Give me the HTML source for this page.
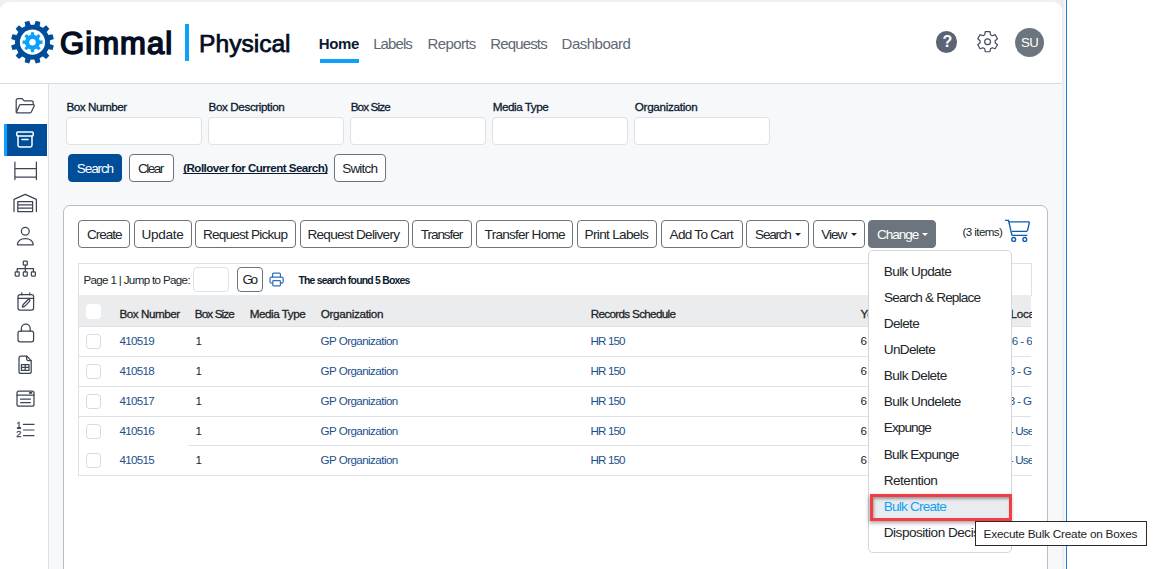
<!DOCTYPE html>
<html lang="en"><head><meta charset="utf-8"><title>Gimmal Physical</title>
<style>
html,body{margin:0;padding:0}
body{width:1159px;height:569px;overflow:hidden;background:#fff;font-family:"Liberation Sans",sans-serif;position:relative;color:#212529}
.abs,.t,.b,.in,.cb{position:absolute;box-sizing:border-box}
.t{white-space:nowrap}
.b{height:28px;top:220px;border:1px solid #6c757d;border-radius:4px;background:#fff}
.in{height:28px;top:117px;width:136px;border:1px solid #dee2e6;border-radius:4px;background:#fff}
.cb{left:86px;width:14.5px;height:14.5px;border:1px solid #d5dae0;border-radius:3.5px;background:#fff}
.ln{position:absolute;left:79px;width:952px;height:1px;background:#dee2e6}
.car{position:absolute;width:0;height:0;border-left:3px solid transparent;border-right:3px solid transparent;border-top:3.5px solid #212529;top:233px}
svg{position:absolute;overflow:visible}
.ic{fill:none;stroke:#3d4555;stroke-width:1.25;stroke-linecap:round;stroke-linejoin:round}
</style></head>
<body>
<div class="abs" style="left:0;top:0;width:1066px;height:569px;background:linear-gradient(to right,#f0f0f0 0,#f0f0f0 1060px,#e7e7e7 1062px,#fbfbfb 1066px)"></div>
<div class="abs" style="left:1066px;top:0;width:1px;height:569px;background:#1c7cd3"></div>
<header class="abs" style="left:0;top:1.6px;width:1062px;height:82.4px;background:#fff;border-bottom:1px solid #d8dde4;border-radius:9px 9px 0 0"></header>
<nav class="abs" style="left:0;top:84px;width:49px;height:485px;background:#fff;border-right:1px solid #dcdfe4"></nav>
<main class="abs" style="left:49px;top:84px;width:1013px;height:485px;background:#f7f8fa"></main>
<svg class="abs" style="left:0;top:0" width="70" height="84" viewBox="0 0 70 84"><path d="M34.21,25.09 L35.77,20.85 L40.35,22.08 L39.58,26.52 L42.54,28.23 L46.01,25.34 L49.36,28.69 L46.47,32.16 L48.18,35.12 L52.62,34.35 L53.85,38.93 L49.61,40.49 L49.61,43.91 L53.85,45.47 L52.62,50.05 L48.18,49.28 L46.47,52.24 L49.36,55.71 L46.01,59.06 L42.54,56.17 L39.58,57.88 L40.35,62.32 L35.77,63.55 L34.21,59.31 L30.79,59.31 L29.23,63.55 L24.65,62.32 L25.42,57.88 L22.46,56.17 L18.99,59.06 L15.64,55.71 L18.53,52.24 L16.82,49.28 L12.38,50.05 L11.15,45.47 L15.39,43.91 L15.39,40.49 L11.15,38.93 L12.38,34.35 L16.82,35.12 L18.53,32.16 L15.64,28.69 L18.99,25.34 L22.46,28.23 L25.42,26.52 L24.65,22.08 L29.23,20.85 L30.79,25.09Z" fill="#004e9a"/><circle cx="32.5" cy="42.2" r="17.4" fill="#004e9a"/><circle cx="32.5" cy="42.2" r="12.6" fill="#fff"/><path d="M30.82,35.20 L30.92,32.22 L34.08,32.22 L34.18,35.20 L36.26,36.06 L38.44,34.03 L40.67,36.26 L38.64,38.44 L39.50,40.52 L42.48,40.62 L42.48,43.78 L39.50,43.88 L38.64,45.96 L40.67,48.14 L38.44,50.37 L36.26,48.34 L34.18,49.20 L34.08,52.18 L30.92,52.18 L30.82,49.20 L28.74,48.34 L26.56,50.37 L24.33,48.14 L26.36,45.96 L25.50,43.88 L22.52,43.78 L22.52,40.62 L25.50,40.52 L26.36,38.44 L24.33,36.26 L26.56,34.03 L28.74,36.06Z" fill="#0aa2fb"/><circle cx="32.5" cy="42.2" r="7.5" fill="#0aa2fb"/><circle cx="32.5" cy="42.2" r="3.2" fill="#fff"/></svg>
<div class="abs" style="left:185px;top:24px;width:4px;height:37px;background:#0aa2fb"></div>
<div class="abs" style="left:320px;top:59px;width:39px;height:4px;background:#0aa2fb"></div>
<div class="abs" style="left:935.6px;top:31px;width:21.5px;height:21.5px;border-radius:50%;background:#5b6475"></div>
<div class="abs" style="left:1015px;top:27.8px;width:29px;height:29px;border-radius:50%;background:#6c757d"></div>
<svg style="left:975px;top:29px" width="26" height="26" viewBox="0 0 26 26"><g fill="none" stroke="#434b5b" stroke-width="1.2" stroke-linejoin="round"><path d="M9.73,5.66 L10.25,2.67 L14.95,2.67 L15.47,5.66 L17.26,6.69 L20.11,5.65 L22.46,9.72 L20.13,11.67 L20.13,13.73 L22.46,15.68 L20.11,19.75 L17.26,18.71 L15.47,19.74 L14.95,22.73 L10.25,22.73 L9.73,19.74 L7.94,18.71 L5.09,19.75 L2.74,15.68 L5.07,13.73 L5.07,11.67 L2.74,9.72 L5.09,5.65 L7.94,6.69Z"/><circle cx="12.6" cy="12.7" r="2.9"/></g></svg>
<div class="abs" style="left:4px;top:124px;width:43px;height:32px;background:#004e9a;border-left:3px solid #0aa2fb"></div>
<svg style="left:15px;top:97px" width="21" height="18" viewBox="0 0 21 18"><g class="ic" ><path d="M1.2 14.5V3.2a1.6 1.6 0 0 1 1.6-1.6h4.4l2 2.2h7.4a1.6 1.6 0 0 1 1.6 1.6v2"/><path d="M1.3 15.6l3.2-7.3a1.2 1.2 0 0 1 1.1-.7h12.8a.9.9 0 0 1 .8 1.3l-2.9 6.2a1.2 1.2 0 0 1-1.1.7H2.2a.9.9 0 0 1-.9-1z"/></g></svg>
<svg style="left:16px;top:130.5px" width="18" height="18" viewBox="0 0 18 18"><g class="ic" style="stroke:#fff;stroke-width:1.5"><rect x="0.8" y="1" width="16.4" height="4" rx="1"/><path d="M2 5v9.3a1.7 1.7 0 0 0 1.7 1.7h10.6a1.7 1.7 0 0 0 1.7-1.7V5"/><path d="M6 8.6h6"/></g></svg>
<svg style="left:13.5px;top:161px" width="24" height="20" viewBox="0 0 24 20"><g class="ic" ><path d="M0.9 1v17.6M22.4 1v17.6M0.9 7.5h21.5M0.9 16h21.5"/></g></svg>
<svg style="left:13px;top:193px" width="25" height="20" viewBox="0 0 25 20"><g class="ic" ><path d="M1 18.6V6.4L12.2 1.4 23.4 6.4V18.6"/><path d="M4.8 18.6V8.6h14.8v10zM4.8 11.9h14.8M4.8 15.2h14.8"/></g></svg>
<svg style="left:16px;top:226px" width="19" height="20" viewBox="0 0 19 20"><g class="ic" ><circle cx="9.3" cy="5.2" r="3.9"/><path d="M1.4 18.8c.2-3.6 3.2-6.2 7.9-6.2s7.7 2.6 7.9 6.2z"/></g></svg>
<svg style="left:14px;top:259.5px" width="23" height="18" viewBox="0 0 23 18"><g class="ic" ><rect x="9.3" y="1" width="4" height="4.2" rx="0.7"/><rect x="1.2" y="11.8" width="4" height="4.2" rx="0.7"/><rect x="9.3" y="11.8" width="4" height="4.2" rx="0.7"/><rect x="17.4" y="11.8" width="4" height="4.2" rx="0.7"/><path d="M11.3 5.2v6.6M3.2 11.8V8.5h16.2v3.3"/></g></svg>
<svg style="left:16.5px;top:291.5px" width="18" height="20" viewBox="0 0 18 20"><g class="ic" ><rect x="1" y="2.6" width="15.6" height="15.4" rx="2"/><path d="M1 6.4h15.6M4.8 0.8v2M12.8 0.8v2"/><path d="M5.4 15.2l.6-2.4 5-5a1 1 0 0 1 1.6 1.6l-5 5z"/></g></svg>
<svg style="left:16.5px;top:323px" width="18" height="20" viewBox="0 0 18 20"><g class="ic" ><rect x="1" y="8.2" width="15.6" height="10.6" rx="2"/><path d="M4.4 8.2V5.6a4.4 4.4 0 0 1 8.8 0v2.6"/></g></svg>
<svg style="left:18px;top:355px" width="15" height="20" viewBox="0 0 15 20"><g class="ic" ><path d="M8.6 1H3a2 2 0 0 0-2 2v13.4a2 2 0 0 0 2 2h8.2a2 2 0 0 0 2-2V5.6z"/><path d="M8.6 1v3a1.6 1.6 0 0 0 1.6 1.6h3"/><path d="M3.4 9.6h7.6v5.8H3.4zM3.4 12.4h7.6M7.2 9.6v5.8"/></g></svg>
<svg style="left:15.7px;top:389.5px" width="20" height="18" viewBox="0 0 20 18"><g class="ic" ><rect x="1" y="1.2" width="17" height="15" rx="2"/><path d="M1 5.2h17M4.6 9.2h9.8M4.6 12.6h9.8"/><path d="M13.6 2.9h2" style="stroke-width:1.6"/></g></svg>
<svg style="left:16px;top:421px" width="20" height="18" viewBox="0 0 20 18"><g class="ic" ><path d="M7.4 3.4h10.6M7.4 9h10.6M7.4 14.6h10.6" style="stroke-width:1.1"/></g></svg>
<span class="t" style="left:16.4px;top:421.09px;font-size:8.4px;line-height:8.4px;-webkit-text-stroke:0.3px #3d4555;color:#3d4555">1</span>
<span class="t" style="left:16.3px;top:430.21px;font-size:9.2px;line-height:9.2px;-webkit-text-stroke:0.3px #3d4555;color:#3d4555">2</span>
<div class="abs" style="left:16.8px;top:427.5px;width:4.6px;height:0.9px;background:#3d4555"></div>
<div class="in" style="left:66px"></div>
<div class="in" style="left:208px"></div>
<div class="in" style="left:350px"></div>
<div class="in" style="left:492px"></div>
<div class="in" style="left:634px"></div>
<div class="b" style="left:68px;top:154px;width:54px;background:#004e9a;border-color:#004e9a"></div>
<div class="b" style="left:129px;top:154px;width:45px"></div>
<div class="b" style="left:334px;top:154px;width:52px"></div>
<section class="abs" style="left:63px;top:205px;width:985px;height:380px;background:#fff;border:1px solid #b9bdc4;border-radius:7px"></section>
<div class="b" style="left:78px;width:52.4px"></div>
<div class="b" style="left:134px;width:57.6px"></div>
<div class="b" style="left:195px;width:100.6px"></div>
<div class="b" style="left:300px;width:108.6px"></div>
<div class="b" style="left:412px;width:59.6px"></div>
<div class="b" style="left:476px;width:96.6px"></div>
<div class="b" style="left:577px;width:79.8px"></div>
<div class="b" style="left:661px;width:81.6px"></div>
<div class="b" style="left:746px;width:62.6px"></div>
<div class="b" style="left:813px;width:51.6px"></div>
<div class="b" style="left:868px;width:68px;background:#6c757d"></div>
<div class="car" style="left:794.6px"></div><div class="car" style="left:851px"></div><div class="car" style="left:922.3px;border-top-color:#fff"></div>
<svg style="left:1000px;top:215px" width="36" height="32" viewBox="1000 215 36 32"><g fill="none" stroke="#0d5cab" stroke-width="1.35" stroke-linecap="round" stroke-linejoin="round"><path d="M1005.5 220.3h2.3a.9.9 0 0 1 .9.7l3 13.3a1.2 1.2 0 0 0 1.2 1h14"/><path d="M1009.2 221.8h19.2a.9.9 0 0 1 .9 1.1l-1.7 7.3a1.4 1.4 0 0 1-1.4 1.1h-13.8"/><circle cx="1013.7" cy="239.4" r="1.9"/><circle cx="1024.8" cy="239.4" r="1.9"/></g></svg>
<div class="abs" style="left:78px;top:263px;width:954px;height:213px;border:1px solid #dee2e6;border-right:0;background:#fff"></div>
<div class="abs" style="left:1031px;top:263px;width:1px;height:33px;background:#dee2e6"></div>
<div class="abs" style="left:79px;top:295.4px;width:952.4px;height:30.8px;background:#ebeced"></div>
<div class="ln" style="top:326px"></div>
<div class="ln" style="top:356px"></div>
<div class="ln" style="top:386px"></div>
<div class="ln" style="top:416px"></div>
<div class="ln" style="top:445px;left:188px;width:843px"></div>
<div class="abs" style="left:193px;top:267px;width:36px;height:25px;border:1px solid #dee2e6;border-radius:4px;background:#fff"></div>
<div class="b" style="left:237px;top:267px;width:26px;height:25px"></div>
<svg style="left:269px;top:272.4px" width="16" height="15" viewBox="0 0 16 15"><g class="ic" style="stroke:#2f6fb5;stroke-width:1.2"><path d="M3.6 5.2V2.2a1 1 0 0 1 1-1h5.8a1 1 0 0 1 1 1v3"/><rect x="1" y="5.2" width="13.2" height="6" rx="1.6"/><rect x="3.8" y="8.6" width="7.6" height="5.2" rx="0.8" fill="#fff"/></g></svg>
<div class="cb" style="top:304px;border-color:#fff"></div>
<div class="cb" style="top:334px"></div>
<div class="cb" style="top:364px"></div>
<div class="cb" style="top:394px"></div>
<div class="cb" style="top:424px"></div>
<div class="cb" style="top:453px"></div>
<div class="abs" style="left:1000px;top:296px;width:31.6px;height:179px;overflow:hidden">
<span class="t" style="left:10.6px;top:11.7px;font-size:11.7px;line-height:11.7px;letter-spacing:-0.3px;-webkit-text-stroke:0.3px #212529">Loca</span>
<span class="t" style="left:11.8px;top:38.8px;font-size:11.6px;line-height:11.6px;letter-spacing:-0.6px;color:#1c4f8c">6 - 6</span>
<span class="t" style="left:8.7px;top:68.8px;font-size:11.6px;line-height:11.6px;letter-spacing:-0.6px;color:#1c4f8c">3 - G</span>
<span class="t" style="left:8.7px;top:98.8px;font-size:11.6px;line-height:11.6px;letter-spacing:-0.6px;color:#1c4f8c">3 - G</span>
<span class="t" style="left:9.7px;top:128.8px;font-size:11.6px;line-height:11.6px;letter-spacing:-0.8px;color:#1c4f8c">- Use</span>
<span class="t" style="left:9.7px;top:157.8px;font-size:11.6px;line-height:11.6px;letter-spacing:-0.8px;color:#1c4f8c">- Use</span>
</div>
<span class="t" style="left:60.00px;top:27.51px;font-size:31.0px;line-height:31.0px;letter-spacing:1.063px;color:#040e23;-webkit-text-stroke:1.6px #040e23;">Gimmal</span>
<span class="t" style="left:199.07px;top:32.08px;font-size:24.6px;line-height:24.6px;letter-spacing:-0.009px;color:#040e23;-webkit-text-stroke:0.75px #040e23;">Physical</span>
<span class="t" style="left:318.80px;top:35.90px;font-size:15px;line-height:15px;letter-spacing:-0.378px;color:#0b1a30;font-weight:700;">Home</span>
<span class="t" style="left:373.20px;top:35.90px;font-size:15px;line-height:15px;letter-spacing:-0.920px;color:#5f6773;">Labels</span>
<span class="t" style="left:427.50px;top:35.90px;font-size:15px;line-height:15px;letter-spacing:-0.620px;color:#5f6773;">Reports</span>
<span class="t" style="left:490.20px;top:35.90px;font-size:15px;line-height:15px;letter-spacing:-0.838px;color:#5f6773;">Requests</span>
<span class="t" style="left:561.60px;top:35.90px;font-size:15px;line-height:15px;letter-spacing:-0.505px;color:#5f6773;">Dashboard</span>
<span class="t" style="left:942.50px;top:33.66px;font-size:16px;line-height:16px;letter-spacing:0.000px;color:#fff;font-weight:700;">?</span>
<span class="t" style="left:1021.00px;top:36.33px;font-size:13.2px;line-height:13.2px;letter-spacing:-0.496px;color:#fff;">SU</span>
<span class="t" style="left:66.55px;top:100.90px;font-size:11.7px;line-height:11.7px;letter-spacing:-0.485px;color:#0b1a30;-webkit-text-stroke:0.3px #0b1a30;">Box Number</span>
<span class="t" style="left:208.55px;top:100.90px;font-size:11.7px;line-height:11.7px;letter-spacing:-0.403px;color:#0b1a30;-webkit-text-stroke:0.3px #0b1a30;">Box Description</span>
<span class="t" style="left:350.65px;top:100.90px;font-size:11.7px;line-height:11.7px;letter-spacing:-0.860px;color:#0b1a30;-webkit-text-stroke:0.3px #0b1a30;">Box Size</span>
<span class="t" style="left:492.65px;top:100.90px;font-size:11.7px;line-height:11.7px;letter-spacing:-0.457px;color:#0b1a30;-webkit-text-stroke:0.3px #0b1a30;">Media Type</span>
<span class="t" style="left:634.75px;top:100.90px;font-size:11.7px;line-height:11.7px;letter-spacing:-0.297px;color:#0b1a30;-webkit-text-stroke:0.3px #0b1a30;">Organization</span>
<span class="t" style="left:76.80px;top:162.09px;font-size:13.6px;line-height:13.6px;letter-spacing:-1.142px;color:#fff;">Search</span>
<span class="t" style="left:138.00px;top:162.09px;font-size:13.6px;line-height:13.6px;letter-spacing:-1.564px;color:#212529;">Clear</span>
<span class="t" style="left:183.20px;top:162.38px;font-size:11.6px;line-height:11.6px;letter-spacing:-0.532px;color:#0b1a30;font-weight:700;text-decoration:underline;text-underline-offset:1px;text-decoration-skip-ink:none;">(Rollover for Current Search)</span>
<span class="t" style="left:342.20px;top:162.09px;font-size:13.6px;line-height:13.6px;letter-spacing:-0.856px;color:#212529;">Switch</span>
<span class="t" style="left:86.90px;top:228.09px;font-size:13.6px;line-height:13.6px;letter-spacing:-1.028px;color:#212529;">Create</span>
<span class="t" style="left:141.60px;top:228.09px;font-size:13.6px;line-height:13.6px;letter-spacing:-0.335px;color:#212529;">Update</span>
<span class="t" style="left:202.90px;top:228.09px;font-size:13.6px;line-height:13.6px;letter-spacing:-0.781px;color:#212529;">Request Pickup</span>
<span class="t" style="left:307.40px;top:228.09px;font-size:13.6px;line-height:13.6px;letter-spacing:-0.727px;color:#212529;">Request Delivery</span>
<span class="t" style="left:420.80px;top:228.09px;font-size:13.6px;line-height:13.6px;letter-spacing:-1.097px;color:#212529;">Transfer</span>
<span class="t" style="left:484.60px;top:228.09px;font-size:13.6px;line-height:13.6px;letter-spacing:-0.765px;color:#212529;">Transfer Home</span>
<span class="t" style="left:584.60px;top:228.09px;font-size:13.6px;line-height:13.6px;letter-spacing:-0.690px;color:#212529;">Print Labels</span>
<span class="t" style="left:669.60px;top:228.09px;font-size:13.6px;line-height:13.6px;letter-spacing:-0.740px;color:#212529;">Add To Cart</span>
<span class="t" style="left:755.10px;top:228.09px;font-size:13.6px;line-height:13.6px;letter-spacing:-1.282px;color:#212529;">Search</span>
<span class="t" style="left:821.30px;top:228.09px;font-size:13.6px;line-height:13.6px;letter-spacing:-1.067px;color:#212529;">View</span>
<span class="t" style="left:876.90px;top:228.09px;font-size:13.6px;line-height:13.6px;letter-spacing:-1.052px;color:#fff;">Change</span>
<span class="t" style="left:962.60px;top:226.18px;font-size:11.6px;line-height:11.6px;letter-spacing:-0.604px;color:#212529;">(3 items)</span>
<span class="t" style="left:83.40px;top:274.18px;font-size:11.6px;line-height:11.6px;letter-spacing:-0.654px;color:#212529;">Page 1 | Jump to Page:</span>
<span class="t" style="left:242.60px;top:273.49px;font-size:13.6px;line-height:13.6px;letter-spacing:-2.774px;color:#212529;">Go</span>
<span class="t" style="left:298.40px;top:276.10px;font-size:10.4px;line-height:10.4px;letter-spacing:-0.755px;color:#0b1a30;font-weight:700;">The search found 5 Boxes</span>
<span class="t" style="left:119.55px;top:307.70px;font-size:11.7px;line-height:11.7px;letter-spacing:-0.485px;color:#212529;-webkit-text-stroke:0.3px #212529;">Box Number</span>
<span class="t" style="left:194.75px;top:307.70px;font-size:11.7px;line-height:11.7px;letter-spacing:-0.875px;color:#212529;-webkit-text-stroke:0.3px #212529;">Box Size</span>
<span class="t" style="left:249.75px;top:307.70px;font-size:11.7px;line-height:11.7px;letter-spacing:-0.469px;color:#212529;-webkit-text-stroke:0.3px #212529;">Media Type</span>
<span class="t" style="left:320.75px;top:307.70px;font-size:11.7px;line-height:11.7px;letter-spacing:-0.315px;color:#212529;-webkit-text-stroke:0.3px #212529;">Organization</span>
<span class="t" style="left:590.75px;top:307.70px;font-size:11.7px;line-height:11.7px;letter-spacing:-0.687px;color:#212529;-webkit-text-stroke:0.3px #212529;">Records Schedule</span>
<span class="t" style="left:860.45px;top:307.70px;font-size:11.7px;line-height:11.7px;letter-spacing:0.079px;color:#212529;-webkit-text-stroke:0.3px #212529;">Ye</span>
<span class="t" style="left:119.40px;top:334.78px;font-size:11.6px;line-height:11.6px;letter-spacing:-0.688px;color:#1c4f8c;">410519</span>
<span class="t" style="left:195.40px;top:334.78px;font-size:11.6px;line-height:11.6px;letter-spacing:0.000px;color:#212529;">1</span>
<span class="t" style="left:320.60px;top:334.78px;font-size:11.6px;line-height:11.6px;letter-spacing:-0.561px;color:#1c4f8c;">GP Organization</span>
<span class="t" style="left:590.60px;top:334.78px;font-size:11.6px;line-height:11.6px;letter-spacing:-0.892px;color:#1c4f8c;">HR 150</span>
<span class="t" style="left:860.60px;top:334.78px;font-size:11.6px;line-height:11.6px;letter-spacing:0.000px;color:#212529;">6</span>
<span class="t" style="left:119.40px;top:364.78px;font-size:11.6px;line-height:11.6px;letter-spacing:-0.688px;color:#1c4f8c;">410518</span>
<span class="t" style="left:195.40px;top:364.78px;font-size:11.6px;line-height:11.6px;letter-spacing:0.000px;color:#212529;">1</span>
<span class="t" style="left:320.60px;top:364.78px;font-size:11.6px;line-height:11.6px;letter-spacing:-0.561px;color:#1c4f8c;">GP Organization</span>
<span class="t" style="left:590.60px;top:364.78px;font-size:11.6px;line-height:11.6px;letter-spacing:-0.892px;color:#1c4f8c;">HR 150</span>
<span class="t" style="left:860.60px;top:364.78px;font-size:11.6px;line-height:11.6px;letter-spacing:0.000px;color:#212529;">6</span>
<span class="t" style="left:119.40px;top:394.78px;font-size:11.6px;line-height:11.6px;letter-spacing:-0.688px;color:#1c4f8c;">410517</span>
<span class="t" style="left:195.40px;top:394.78px;font-size:11.6px;line-height:11.6px;letter-spacing:0.000px;color:#212529;">1</span>
<span class="t" style="left:320.60px;top:394.78px;font-size:11.6px;line-height:11.6px;letter-spacing:-0.561px;color:#1c4f8c;">GP Organization</span>
<span class="t" style="left:590.60px;top:394.78px;font-size:11.6px;line-height:11.6px;letter-spacing:-0.892px;color:#1c4f8c;">HR 150</span>
<span class="t" style="left:860.60px;top:394.78px;font-size:11.6px;line-height:11.6px;letter-spacing:0.000px;color:#212529;">6</span>
<span class="t" style="left:119.40px;top:424.78px;font-size:11.6px;line-height:11.6px;letter-spacing:-0.688px;color:#1c4f8c;">410516</span>
<span class="t" style="left:195.40px;top:424.78px;font-size:11.6px;line-height:11.6px;letter-spacing:0.000px;color:#212529;">1</span>
<span class="t" style="left:320.60px;top:424.78px;font-size:11.6px;line-height:11.6px;letter-spacing:-0.561px;color:#1c4f8c;">GP Organization</span>
<span class="t" style="left:590.60px;top:424.78px;font-size:11.6px;line-height:11.6px;letter-spacing:-0.892px;color:#1c4f8c;">HR 150</span>
<span class="t" style="left:860.60px;top:424.78px;font-size:11.6px;line-height:11.6px;letter-spacing:0.000px;color:#212529;">6</span>
<span class="t" style="left:119.40px;top:453.78px;font-size:11.6px;line-height:11.6px;letter-spacing:-0.688px;color:#1c4f8c;">410515</span>
<span class="t" style="left:195.40px;top:453.78px;font-size:11.6px;line-height:11.6px;letter-spacing:0.000px;color:#212529;">1</span>
<span class="t" style="left:320.60px;top:453.78px;font-size:11.6px;line-height:11.6px;letter-spacing:-0.561px;color:#1c4f8c;">GP Organization</span>
<span class="t" style="left:590.60px;top:453.78px;font-size:11.6px;line-height:11.6px;letter-spacing:-0.892px;color:#1c4f8c;">HR 150</span>
<span class="t" style="left:860.60px;top:453.78px;font-size:11.6px;line-height:11.6px;letter-spacing:0.000px;color:#212529;">6</span>
<div class="abs" style="left:868px;top:250px;width:144px;height:303px;background:#fff;border:1px solid #d3d6da;border-radius:5px"></div>
<div class="abs" style="left:870px;top:493.7px;width:142px;height:27.2px;background:#e9ecef;border:3px solid #f23d45;box-shadow:inset 1px 2px 3px rgba(0,0,0,.35),-1px 2px 4px rgba(0,0,0,.35)"></div>
<span class="t" style="left:883.80px;top:264.64px;font-size:13.6px;line-height:13.6px;letter-spacing:-0.610px;color:#212529;">Bulk Update</span>
<span class="t" style="left:884.10px;top:290.89px;font-size:13.6px;line-height:13.6px;letter-spacing:-0.847px;color:#212529;">Search &amp; Replace</span>
<span class="t" style="left:883.80px;top:316.64px;font-size:13.6px;line-height:13.6px;letter-spacing:-0.667px;color:#212529;">Delete</span>
<span class="t" style="left:883.80px;top:342.89px;font-size:13.6px;line-height:13.6px;letter-spacing:-0.673px;color:#212529;">UnDelete</span>
<span class="t" style="left:883.80px;top:368.89px;font-size:13.6px;line-height:13.6px;letter-spacing:-0.606px;color:#212529;">Bulk Delete</span>
<span class="t" style="left:883.80px;top:394.69px;font-size:13.6px;line-height:13.6px;letter-spacing:-0.590px;color:#212529;">Bulk Undelete</span>
<span class="t" style="left:883.80px;top:421.09px;font-size:13.6px;line-height:13.6px;letter-spacing:-0.934px;color:#212529;">Expunge</span>
<span class="t" style="left:883.80px;top:447.79px;font-size:13.6px;line-height:13.6px;letter-spacing:-0.757px;color:#212529;">Bulk Expunge</span>
<span class="t" style="left:883.80px;top:473.69px;font-size:13.6px;line-height:13.6px;letter-spacing:-0.529px;color:#212529;">Retention</span>
<span class="t" style="left:883.80px;top:499.89px;font-size:13.6px;line-height:13.6px;letter-spacing:-0.796px;color:#12a1f2;">Bulk Create</span>
<span class="t" style="left:883.80px;top:526.09px;font-size:13.6px;line-height:13.6px;letter-spacing:-0.507px;color:#212529;">Disposition Decision</span>
<div class="abs" style="left:975px;top:521px;width:172px;height:25px;background:#fff;border:1px solid #2b2b2b"></div>
<span class="t" style="left:983.60px;top:528.71px;font-size:11.8px;line-height:11.8px;letter-spacing:-0.226px;color:#222;">Execute Bulk Create on Boxes</span>
</body></html>
